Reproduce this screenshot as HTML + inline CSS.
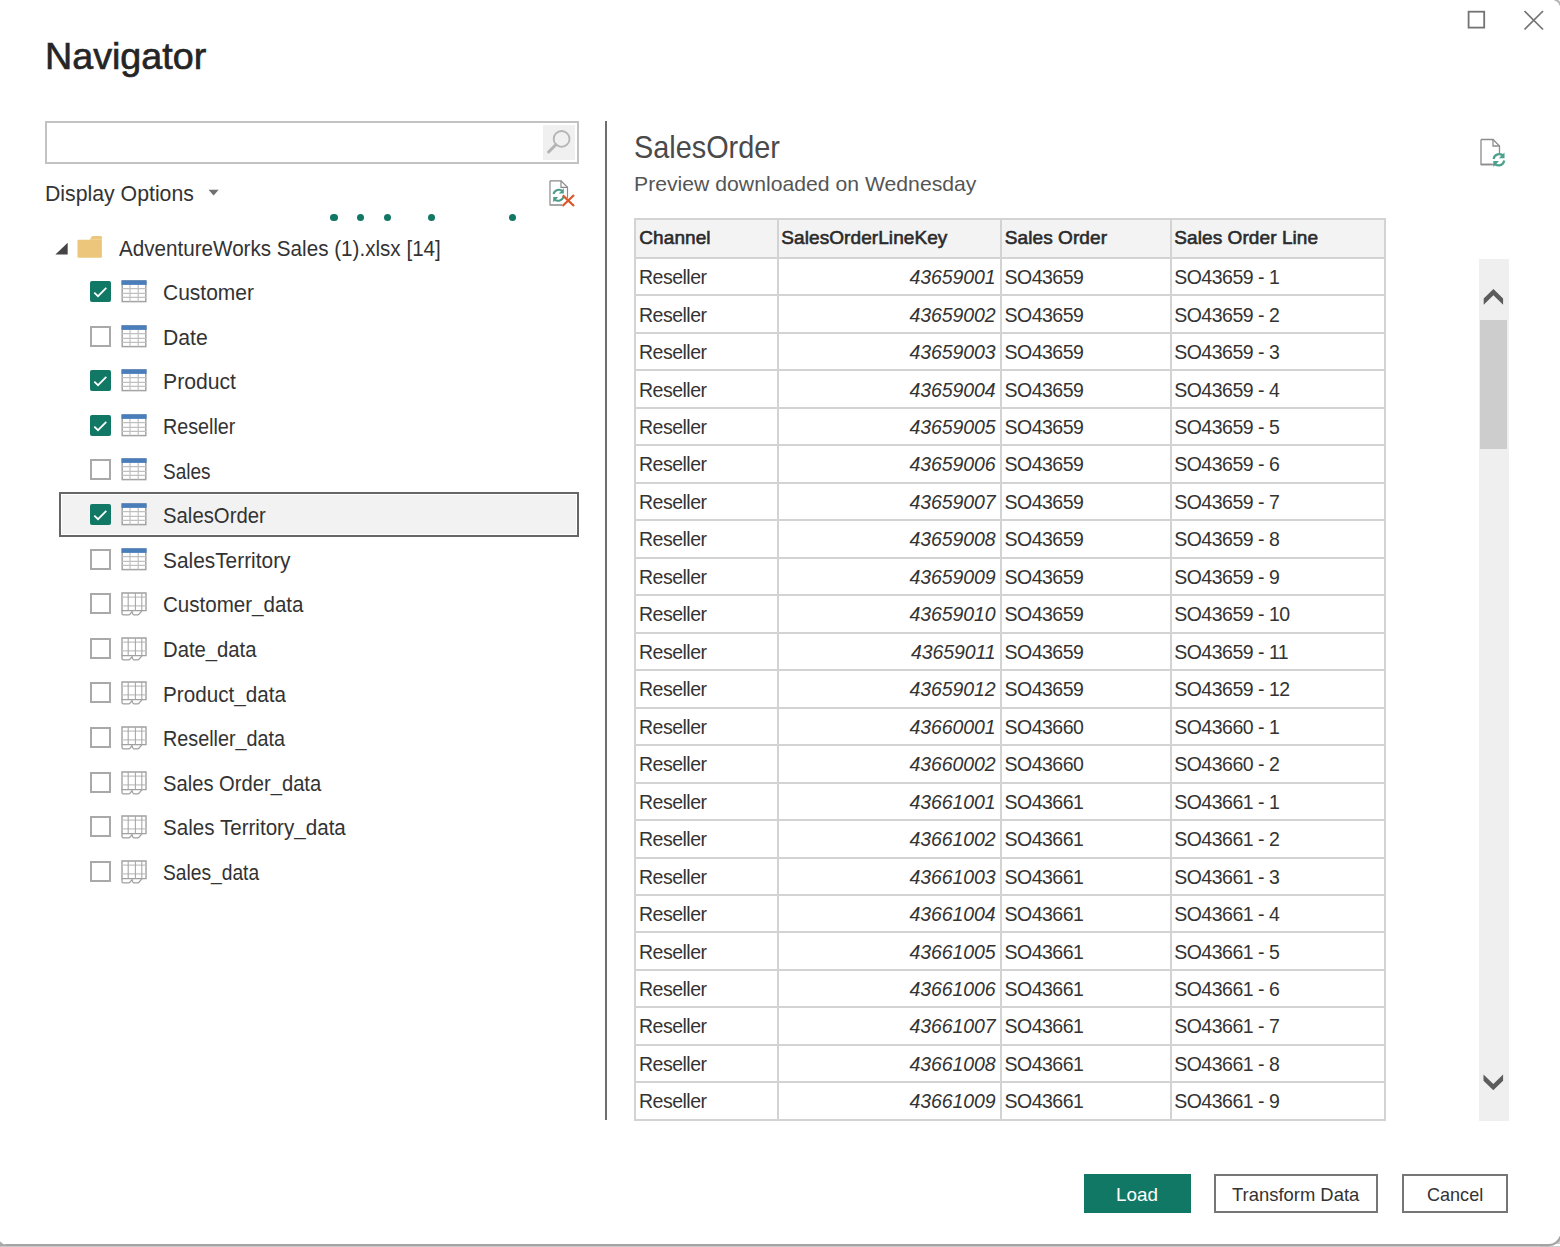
<!DOCTYPE html>
<html><head><meta charset="utf-8"><title>Navigator</title>
<style>
html,body{margin:0;padding:0;}
body{width:1560px;height:1247px;position:relative;overflow:hidden;background:#fff;font-family:"Liberation Sans", sans-serif;}
.t{position:absolute;line-height:1;white-space:nowrap;}
.b{position:absolute;}
svg.b{overflow:visible;}
</style></head><body>
<svg class="b" style="left:0;top:0" width="1560" height="60"><rect x="1468.6" y="11.7" width="15.6" height="15.9" fill="none" stroke="#737373" stroke-width="1.8"/><path d="M1524.5 11 L1543 29.5 M1543 11 L1524.5 29.5" stroke="#737373" stroke-width="1.7" fill="none"/></svg>
<div class="t " style="left:44.75px;top:37.68px;font-size:37px;color:#252525;font-weight:normal;font-style:normal;letter-spacing:0px;-webkit-text-stroke:0.65px #252525;transform:scaleX(1.0181);transform-origin:0 0">Navigator</div>
<div class="b" style="left:45px;top:121px;width:534px;height:43px;border:2px solid #c2c2c2;box-sizing:border-box;background:#fff"></div>
<div class="b" style="left:543px;top:125px;width:32px;height:35px;background:#f0f0f0"></div>
<svg class="b" style="left:543px;top:125px" width="32" height="35"><circle cx="18.6" cy="13.9" r="7.9" fill="none" stroke="#b4b4b4" stroke-width="1.8"/><path d="M12.8 19.7 L5.6 27" stroke="#b4b4b4" stroke-width="3" stroke-linecap="round"/></svg>
<div class="t " style="left:44.95px;top:183.38px;font-size:22px;color:#333;font-weight:normal;font-style:normal;letter-spacing:0px;;transform:scaleX(0.9664);transform-origin:0 0">Display Options</div>
<svg class="b" style="left:205px;top:186px" width="16" height="12"><path d="M3.5 3.8 L13.7 3.8 L8.6 9.6 Z" fill="#707070"/></svg>
<svg class="b" style="left:545px;top:176px" width="34" height="34"><path d="M5 4.8 H16 L22.5 11.3 V22 M17 29 H5 Z" fill="#fff" stroke="#8a8a8a" stroke-width="1.2"/><path d="M5 4.8 V29 H17" fill="none" stroke="#8a8a8a" stroke-width="1.2"/><path d="M16 4.8 V11.3 H22.5" fill="none" stroke="#8a8a8a" stroke-width="1.2"/><path d="M8.5 18 A5.6 5.6 0 0 1 17.6 15.2" fill="none" stroke="#4d9c8a" stroke-width="2"/><path d="M18.8 12.3 V17.6 H13.8 Z" fill="#4d9c8a"/><path d="M18.6 20.6 A5.6 5.6 0 0 1 9.5 23.4" fill="none" stroke="#4d9c8a" stroke-width="2"/><path d="M8.2 26.2 V21 H13.2 Z" fill="#4d9c8a"/><path d="M17.5 30 L29 19 M17.8 19.4 L29 30" stroke="#d9592c" stroke-width="2.3"/></svg>
<div class="b" style="left:330.4px;top:213.8px;width:7.4px;height:7.4px;border-radius:50%;background:#117865"></div>
<div class="b" style="left:356.9px;top:213.8px;width:7.4px;height:7.4px;border-radius:50%;background:#117865"></div>
<div class="b" style="left:384.0px;top:213.8px;width:7.4px;height:7.4px;border-radius:50%;background:#117865"></div>
<div class="b" style="left:427.5px;top:213.8px;width:7.4px;height:7.4px;border-radius:50%;background:#117865"></div>
<div class="b" style="left:509.0px;top:213.8px;width:7.4px;height:7.4px;border-radius:50%;background:#117865"></div>
<svg class="b" style="left:54px;top:241px" width="16" height="16"><path d="M13.7 1.7 L13.7 13.6 L1.4 13.6 Z" fill="#444"/></svg>
<svg class="b" style="left:76px;top:234px" width="28" height="26"><path d="M13.6 5.8 L15.8 2.6 Q16.2 2 17 2 H24.8 Q25.9 2 25.9 3.1 V5.8 Z" fill="#ecc67a"/><rect x="1.5" y="5.8" width="24.4" height="17.9" rx="0.8" fill="#ecc67a"/></svg>
<div class="t " style="left:118.50px;top:238.60px;font-size:21.5px;color:#333;font-weight:normal;font-style:normal;letter-spacing:0px;;transform:scaleX(0.9596);transform-origin:0 0">AdventureWorks Sales (1).xlsx [14]</div>
<div class="b" style="left:59px;top:492px;width:520px;height:45px;border:2px solid #666;box-sizing:border-box;background:#f2f2f2;box-shadow:inset 0 0 0 1px #fff"></div>
<div class="b" style="left:90px;top:281px;width:21px;height:21px;border-radius:2px;background:#117865"></div>
<svg class="b" style="left:90px;top:281px" width="21" height="21"><path d="M4.3 11.6 L8 15.2 L16.3 6.8" fill="none" stroke="#fff" stroke-width="1.7"/></svg>
<svg class="b" style="left:121.3px;top:280px" width="26" height="24"><rect x="1.2" y="1" width="23.6" height="20.6" fill="#fff" stroke="#a3a3a3" stroke-width="1.5"/><path d="M1 8.7 H25 M1 13.3 H25 M1 17.4 H25 M9 5 V21.5 M17.2 5 V21.5" stroke="#c0c0c0" stroke-width="1.2"/><rect x="0.5" y="0.3" width="25.1" height="4.6" fill="#4a7ebb"/></svg>
<div class="t " style="left:163.00px;top:283.20px;font-size:21.5px;color:#333;font-weight:normal;font-style:normal;letter-spacing:0px;transform:scaleX(0.9763);transform-origin:0 0">Customer</div>
<div class="b" style="left:90px;top:326px;width:21px;height:21px;border:2px solid #a9a9a9;box-sizing:border-box;background:#fff"></div>
<svg class="b" style="left:121.3px;top:325px" width="26" height="24"><rect x="1.2" y="1" width="23.6" height="20.6" fill="#fff" stroke="#a3a3a3" stroke-width="1.5"/><path d="M1 8.7 H25 M1 13.3 H25 M1 17.4 H25 M9 5 V21.5 M17.2 5 V21.5" stroke="#c0c0c0" stroke-width="1.2"/><rect x="0.5" y="0.3" width="25.1" height="4.6" fill="#4a7ebb"/></svg>
<div class="t " style="left:163.00px;top:327.80px;font-size:21.5px;color:#333;font-weight:normal;font-style:normal;letter-spacing:0px;transform:scaleX(0.9841);transform-origin:0 0">Date</div>
<div class="b" style="left:90px;top:370px;width:21px;height:21px;border-radius:2px;background:#117865"></div>
<svg class="b" style="left:90px;top:370px" width="21" height="21"><path d="M4.3 11.6 L8 15.2 L16.3 6.8" fill="none" stroke="#fff" stroke-width="1.7"/></svg>
<svg class="b" style="left:121.3px;top:369px" width="26" height="24"><rect x="1.2" y="1" width="23.6" height="20.6" fill="#fff" stroke="#a3a3a3" stroke-width="1.5"/><path d="M1 8.7 H25 M1 13.3 H25 M1 17.4 H25 M9 5 V21.5 M17.2 5 V21.5" stroke="#c0c0c0" stroke-width="1.2"/><rect x="0.5" y="0.3" width="25.1" height="4.6" fill="#4a7ebb"/></svg>
<div class="t " style="left:163.00px;top:372.40px;font-size:21.5px;color:#333;font-weight:normal;font-style:normal;letter-spacing:0px;transform:scaleX(0.9851);transform-origin:0 0">Product</div>
<div class="b" style="left:90px;top:415px;width:21px;height:21px;border-radius:2px;background:#117865"></div>
<svg class="b" style="left:90px;top:415px" width="21" height="21"><path d="M4.3 11.6 L8 15.2 L16.3 6.8" fill="none" stroke="#fff" stroke-width="1.7"/></svg>
<svg class="b" style="left:121.3px;top:414px" width="26" height="24"><rect x="1.2" y="1" width="23.6" height="20.6" fill="#fff" stroke="#a3a3a3" stroke-width="1.5"/><path d="M1 8.7 H25 M1 13.3 H25 M1 17.4 H25 M9 5 V21.5 M17.2 5 V21.5" stroke="#c0c0c0" stroke-width="1.2"/><rect x="0.5" y="0.3" width="25.1" height="4.6" fill="#4a7ebb"/></svg>
<div class="t " style="left:163.00px;top:417.00px;font-size:21.5px;color:#333;font-weight:normal;font-style:normal;letter-spacing:0px;transform:scaleX(0.9177);transform-origin:0 0">Reseller</div>
<div class="b" style="left:90px;top:459px;width:21px;height:21px;border:2px solid #a9a9a9;box-sizing:border-box;background:#fff"></div>
<svg class="b" style="left:121.3px;top:458px" width="26" height="24"><rect x="1.2" y="1" width="23.6" height="20.6" fill="#fff" stroke="#a3a3a3" stroke-width="1.5"/><path d="M1 8.7 H25 M1 13.3 H25 M1 17.4 H25 M9 5 V21.5 M17.2 5 V21.5" stroke="#c0c0c0" stroke-width="1.2"/><rect x="0.5" y="0.3" width="25.1" height="4.6" fill="#4a7ebb"/></svg>
<div class="t " style="left:163.00px;top:461.60px;font-size:21.5px;color:#333;font-weight:normal;font-style:normal;letter-spacing:0px;transform:scaleX(0.8849);transform-origin:0 0">Sales</div>
<div class="b" style="left:90px;top:504px;width:21px;height:21px;border-radius:2px;background:#117865"></div>
<svg class="b" style="left:90px;top:504px" width="21" height="21"><path d="M4.3 11.6 L8 15.2 L16.3 6.8" fill="none" stroke="#fff" stroke-width="1.7"/></svg>
<svg class="b" style="left:121.3px;top:503px" width="26" height="24"><rect x="1.2" y="1" width="23.6" height="20.6" fill="#fff" stroke="#a3a3a3" stroke-width="1.5"/><path d="M1 8.7 H25 M1 13.3 H25 M1 17.4 H25 M9 5 V21.5 M17.2 5 V21.5" stroke="#c0c0c0" stroke-width="1.2"/><rect x="0.5" y="0.3" width="25.1" height="4.6" fill="#4a7ebb"/></svg>
<div class="t " style="left:163.00px;top:506.20px;font-size:21.5px;color:#333;font-weight:normal;font-style:normal;letter-spacing:0px;transform:scaleX(0.9454);transform-origin:0 0">SalesOrder</div>
<div class="b" style="left:90px;top:549px;width:21px;height:21px;border:2px solid #a9a9a9;box-sizing:border-box;background:#fff"></div>
<svg class="b" style="left:121.3px;top:548px" width="26" height="24"><rect x="1.2" y="1" width="23.6" height="20.6" fill="#fff" stroke="#a3a3a3" stroke-width="1.5"/><path d="M1 8.7 H25 M1 13.3 H25 M1 17.4 H25 M9 5 V21.5 M17.2 5 V21.5" stroke="#c0c0c0" stroke-width="1.2"/><rect x="0.5" y="0.3" width="25.1" height="4.6" fill="#4a7ebb"/></svg>
<div class="t " style="left:163.00px;top:550.80px;font-size:21.5px;color:#333;font-weight:normal;font-style:normal;letter-spacing:0px;transform:scaleX(0.9702);transform-origin:0 0">SalesTerritory</div>
<div class="b" style="left:90px;top:593px;width:21px;height:21px;border:2px solid #a9a9a9;box-sizing:border-box;background:#fff"></div>
<svg class="b" style="left:121.3px;top:592px" width="26" height="25"><path d="M1 1 H25 V18.6 H1 Z" fill="#fff" stroke="#a0a0a0" stroke-width="1.4"/><path d="M1 5.2 H25 M1 13.9 H25" stroke="#c4c4c4" stroke-width="1.2"/><path d="M7.2 1 V18.6 M14.4 1 V18.6 M20.8 1 V18.6" stroke="#a8a8a8" stroke-width="1.1"/><path d="M1 18.6 V21.5 Q1 22.8 2.3 22.8 H7.5 Q8.5 22.8 9.3 21.8 L11 19.6 Q11.8 22.8 13 22.8 H16.6 Q17.5 22.8 18.3 21.8 L21 18.6" fill="none" stroke="#a0a0a0" stroke-width="1.3"/></svg>
<div class="t " style="left:163.00px;top:595.40px;font-size:21.5px;color:#333;font-weight:normal;font-style:normal;letter-spacing:0px;transform:scaleX(0.9558);transform-origin:0 0">Customer_data</div>
<div class="b" style="left:90px;top:638px;width:21px;height:21px;border:2px solid #a9a9a9;box-sizing:border-box;background:#fff"></div>
<svg class="b" style="left:121.3px;top:637px" width="26" height="25"><path d="M1 1 H25 V18.6 H1 Z" fill="#fff" stroke="#a0a0a0" stroke-width="1.4"/><path d="M1 5.2 H25 M1 13.9 H25" stroke="#c4c4c4" stroke-width="1.2"/><path d="M7.2 1 V18.6 M14.4 1 V18.6 M20.8 1 V18.6" stroke="#a8a8a8" stroke-width="1.1"/><path d="M1 18.6 V21.5 Q1 22.8 2.3 22.8 H7.5 Q8.5 22.8 9.3 21.8 L11 19.6 Q11.8 22.8 13 22.8 H16.6 Q17.5 22.8 18.3 21.8 L21 18.6" fill="none" stroke="#a0a0a0" stroke-width="1.3"/></svg>
<div class="t " style="left:163.00px;top:640.00px;font-size:21.5px;color:#333;font-weight:normal;font-style:normal;letter-spacing:0px;transform:scaleX(0.9424);transform-origin:0 0">Date_data</div>
<div class="b" style="left:90px;top:682px;width:21px;height:21px;border:2px solid #a9a9a9;box-sizing:border-box;background:#fff"></div>
<svg class="b" style="left:121.3px;top:681px" width="26" height="25"><path d="M1 1 H25 V18.6 H1 Z" fill="#fff" stroke="#a0a0a0" stroke-width="1.4"/><path d="M1 5.2 H25 M1 13.9 H25" stroke="#c4c4c4" stroke-width="1.2"/><path d="M7.2 1 V18.6 M14.4 1 V18.6 M20.8 1 V18.6" stroke="#a8a8a8" stroke-width="1.1"/><path d="M1 18.6 V21.5 Q1 22.8 2.3 22.8 H7.5 Q8.5 22.8 9.3 21.8 L11 19.6 Q11.8 22.8 13 22.8 H16.6 Q17.5 22.8 18.3 21.8 L21 18.6" fill="none" stroke="#a0a0a0" stroke-width="1.3"/></svg>
<div class="t " style="left:163.00px;top:684.60px;font-size:21.5px;color:#333;font-weight:normal;font-style:normal;letter-spacing:0px;transform:scaleX(0.9609);transform-origin:0 0">Product_data</div>
<div class="b" style="left:90px;top:727px;width:21px;height:21px;border:2px solid #a9a9a9;box-sizing:border-box;background:#fff"></div>
<svg class="b" style="left:121.3px;top:726px" width="26" height="25"><path d="M1 1 H25 V18.6 H1 Z" fill="#fff" stroke="#a0a0a0" stroke-width="1.4"/><path d="M1 5.2 H25 M1 13.9 H25" stroke="#c4c4c4" stroke-width="1.2"/><path d="M7.2 1 V18.6 M14.4 1 V18.6 M20.8 1 V18.6" stroke="#a8a8a8" stroke-width="1.1"/><path d="M1 18.6 V21.5 Q1 22.8 2.3 22.8 H7.5 Q8.5 22.8 9.3 21.8 L11 19.6 Q11.8 22.8 13 22.8 H16.6 Q17.5 22.8 18.3 21.8 L21 18.6" fill="none" stroke="#a0a0a0" stroke-width="1.3"/></svg>
<div class="t " style="left:163.00px;top:729.20px;font-size:21.5px;color:#333;font-weight:normal;font-style:normal;letter-spacing:0px;transform:scaleX(0.9203);transform-origin:0 0">Reseller_data</div>
<div class="b" style="left:90px;top:772px;width:21px;height:21px;border:2px solid #a9a9a9;box-sizing:border-box;background:#fff"></div>
<svg class="b" style="left:121.3px;top:771px" width="26" height="25"><path d="M1 1 H25 V18.6 H1 Z" fill="#fff" stroke="#a0a0a0" stroke-width="1.4"/><path d="M1 5.2 H25 M1 13.9 H25" stroke="#c4c4c4" stroke-width="1.2"/><path d="M7.2 1 V18.6 M14.4 1 V18.6 M20.8 1 V18.6" stroke="#a8a8a8" stroke-width="1.1"/><path d="M1 18.6 V21.5 Q1 22.8 2.3 22.8 H7.5 Q8.5 22.8 9.3 21.8 L11 19.6 Q11.8 22.8 13 22.8 H16.6 Q17.5 22.8 18.3 21.8 L21 18.6" fill="none" stroke="#a0a0a0" stroke-width="1.3"/></svg>
<div class="t " style="left:163.00px;top:773.80px;font-size:21.5px;color:#333;font-weight:normal;font-style:normal;letter-spacing:0px;transform:scaleX(0.9387);transform-origin:0 0">Sales Order_data</div>
<div class="b" style="left:90px;top:816px;width:21px;height:21px;border:2px solid #a9a9a9;box-sizing:border-box;background:#fff"></div>
<svg class="b" style="left:121.3px;top:815px" width="26" height="25"><path d="M1 1 H25 V18.6 H1 Z" fill="#fff" stroke="#a0a0a0" stroke-width="1.4"/><path d="M1 5.2 H25 M1 13.9 H25" stroke="#c4c4c4" stroke-width="1.2"/><path d="M7.2 1 V18.6 M14.4 1 V18.6 M20.8 1 V18.6" stroke="#a8a8a8" stroke-width="1.1"/><path d="M1 18.6 V21.5 Q1 22.8 2.3 22.8 H7.5 Q8.5 22.8 9.3 21.8 L11 19.6 Q11.8 22.8 13 22.8 H16.6 Q17.5 22.8 18.3 21.8 L21 18.6" fill="none" stroke="#a0a0a0" stroke-width="1.3"/></svg>
<div class="t " style="left:163.00px;top:818.40px;font-size:21.5px;color:#333;font-weight:normal;font-style:normal;letter-spacing:0px;transform:scaleX(0.9581);transform-origin:0 0">Sales Territory_data</div>
<div class="b" style="left:90px;top:861px;width:21px;height:21px;border:2px solid #a9a9a9;box-sizing:border-box;background:#fff"></div>
<svg class="b" style="left:121.3px;top:860px" width="26" height="25"><path d="M1 1 H25 V18.6 H1 Z" fill="#fff" stroke="#a0a0a0" stroke-width="1.4"/><path d="M1 5.2 H25 M1 13.9 H25" stroke="#c4c4c4" stroke-width="1.2"/><path d="M7.2 1 V18.6 M14.4 1 V18.6 M20.8 1 V18.6" stroke="#a8a8a8" stroke-width="1.1"/><path d="M1 18.6 V21.5 Q1 22.8 2.3 22.8 H7.5 Q8.5 22.8 9.3 21.8 L11 19.6 Q11.8 22.8 13 22.8 H16.6 Q17.5 22.8 18.3 21.8 L21 18.6" fill="none" stroke="#a0a0a0" stroke-width="1.3"/></svg>
<div class="t " style="left:163.00px;top:863.00px;font-size:21.5px;color:#333;font-weight:normal;font-style:normal;letter-spacing:0px;transform:scaleX(0.8935);transform-origin:0 0">Sales_data</div>
<div class="b" style="left:605px;top:121px;width:2px;height:999px;background:#6e6e6e"></div>
<div class="t " style="left:634.37px;top:130.71px;font-size:32px;color:#4a4a4a;font-weight:normal;font-style:normal;letter-spacing:0px;;transform:scaleX(0.9013);transform-origin:0 0">SalesOrder</div>
<div class="t " style="left:634.39px;top:172.52px;font-size:21px;color:#555;font-weight:normal;font-style:normal;letter-spacing:0px;;transform:scaleX(1.0092);transform-origin:0 0">Preview downloaded on Wednesday</div>
<svg class="b" style="left:1476px;top:134px" width="34" height="36"><path d="M5 5.5 H17 L23.5 12 V21 M21 30.5 H5 Z" fill="none" stroke="#8c8c8c" stroke-width="1.3"/><path d="M5 5.5 V30.5 H16" fill="none" stroke="#8c8c8c" stroke-width="1.3"/><path d="M17 5.5 V12 H23.5" fill="none" stroke="#8c8c8c" stroke-width="1.3"/><path d="M17.6 25 A5.7 5.7 0 0 1 27.5 22" fill="none" stroke="#4da08b" stroke-width="2.2"/><path d="M28.5 18.5 V24.3 H22.8 Z" fill="#4da08b"/><path d="M28.2 26.5 A5.7 5.7 0 0 1 18.3 29.5" fill="none" stroke="#4da08b" stroke-width="2.2"/><path d="M17.3 33 V27 H23 Z" fill="#4da08b"/></svg>
<div class="b" style="left:634px;top:218px;width:752px;height:903px;background:#fff;border:2px solid #d3d3d3;box-sizing:border-box"></div>
<div class="b" style="left:636px;top:220px;width:748px;height:37px;background:#f3f3f3"></div>
<div class="b" style="left:634px;top:257px;width:752px;height:2px;background:#d3d3d3"></div>
<div class="b" style="left:634px;top:294px;width:752px;height:2px;background:#d3d3d3"></div>
<div class="b" style="left:634px;top:332px;width:752px;height:2px;background:#d3d3d3"></div>
<div class="b" style="left:634px;top:369px;width:752px;height:2px;background:#d3d3d3"></div>
<div class="b" style="left:634px;top:407px;width:752px;height:2px;background:#d3d3d3"></div>
<div class="b" style="left:634px;top:444px;width:752px;height:2px;background:#d3d3d3"></div>
<div class="b" style="left:634px;top:482px;width:752px;height:2px;background:#d3d3d3"></div>
<div class="b" style="left:634px;top:519px;width:752px;height:2px;background:#d3d3d3"></div>
<div class="b" style="left:634px;top:557px;width:752px;height:2px;background:#d3d3d3"></div>
<div class="b" style="left:634px;top:594px;width:752px;height:2px;background:#d3d3d3"></div>
<div class="b" style="left:634px;top:632px;width:752px;height:2px;background:#d3d3d3"></div>
<div class="b" style="left:634px;top:669px;width:752px;height:2px;background:#d3d3d3"></div>
<div class="b" style="left:634px;top:707px;width:752px;height:2px;background:#d3d3d3"></div>
<div class="b" style="left:634px;top:744px;width:752px;height:2px;background:#d3d3d3"></div>
<div class="b" style="left:634px;top:782px;width:752px;height:2px;background:#d3d3d3"></div>
<div class="b" style="left:634px;top:819px;width:752px;height:2px;background:#d3d3d3"></div>
<div class="b" style="left:634px;top:857px;width:752px;height:2px;background:#d3d3d3"></div>
<div class="b" style="left:634px;top:894px;width:752px;height:2px;background:#d3d3d3"></div>
<div class="b" style="left:634px;top:931px;width:752px;height:2px;background:#d3d3d3"></div>
<div class="b" style="left:634px;top:969px;width:752px;height:2px;background:#d3d3d3"></div>
<div class="b" style="left:634px;top:1006px;width:752px;height:2px;background:#d3d3d3"></div>
<div class="b" style="left:634px;top:1044px;width:752px;height:2px;background:#d3d3d3"></div>
<div class="b" style="left:634px;top:1081px;width:752px;height:2px;background:#d3d3d3"></div>
<div class="b" style="left:777px;top:218px;width:2px;height:903px;background:#d3d3d3"></div>
<div class="b" style="left:1000px;top:218px;width:2px;height:903px;background:#d3d3d3"></div>
<div class="b" style="left:1170px;top:218px;width:2px;height:903px;background:#d3d3d3"></div>
<div class="t " style="left:639.30px;top:228.22px;font-size:19px;color:#2b2b2b;font-weight:normal;font-style:normal;letter-spacing:0.08px;-webkit-text-stroke:0.6px #2b2b2b">Channel</div>
<div class="t " style="left:781.30px;top:228.22px;font-size:19px;color:#2b2b2b;font-weight:normal;font-style:normal;letter-spacing:0.08px;-webkit-text-stroke:0.6px #2b2b2b">SalesOrderLineKey</div>
<div class="t " style="left:1004.80px;top:228.22px;font-size:19px;color:#2b2b2b;font-weight:normal;font-style:normal;letter-spacing:0.08px;-webkit-text-stroke:0.6px #2b2b2b">Sales Order</div>
<div class="t " style="left:1174.30px;top:228.22px;font-size:19px;color:#2b2b2b;font-weight:normal;font-style:normal;letter-spacing:0.08px;-webkit-text-stroke:0.6px #2b2b2b">Sales Order Line</div>
<div class="t " style="left:639.00px;top:268.09px;font-size:19.5px;color:#333;font-weight:normal;font-style:normal;letter-spacing:-0.5px;">Reseller</div>
<div class="t" style="right:564.50px;top:268.09px;font-size:19.5px;color:#333;font-weight:normal;font-style:italic;letter-spacing:-0.1px;">43659001</div>
<div class="t " style="left:1004.50px;top:268.09px;font-size:19.5px;color:#333;font-weight:normal;font-style:normal;letter-spacing:-0.5px;">SO43659</div>
<div class="t " style="left:1174.20px;top:268.09px;font-size:19.5px;color:#333;font-weight:normal;font-style:normal;letter-spacing:-0.5px;">SO43659 - 1</div>
<div class="t " style="left:639.00px;top:305.56px;font-size:19.5px;color:#333;font-weight:normal;font-style:normal;letter-spacing:-0.5px;">Reseller</div>
<div class="t" style="right:564.50px;top:305.56px;font-size:19.5px;color:#333;font-weight:normal;font-style:italic;letter-spacing:-0.1px;">43659002</div>
<div class="t " style="left:1004.50px;top:305.56px;font-size:19.5px;color:#333;font-weight:normal;font-style:normal;letter-spacing:-0.5px;">SO43659</div>
<div class="t " style="left:1174.20px;top:305.56px;font-size:19.5px;color:#333;font-weight:normal;font-style:normal;letter-spacing:-0.5px;">SO43659 - 2</div>
<div class="t " style="left:639.00px;top:343.03px;font-size:19.5px;color:#333;font-weight:normal;font-style:normal;letter-spacing:-0.5px;">Reseller</div>
<div class="t" style="right:564.50px;top:343.03px;font-size:19.5px;color:#333;font-weight:normal;font-style:italic;letter-spacing:-0.1px;">43659003</div>
<div class="t " style="left:1004.50px;top:343.03px;font-size:19.5px;color:#333;font-weight:normal;font-style:normal;letter-spacing:-0.5px;">SO43659</div>
<div class="t " style="left:1174.20px;top:343.03px;font-size:19.5px;color:#333;font-weight:normal;font-style:normal;letter-spacing:-0.5px;">SO43659 - 3</div>
<div class="t " style="left:639.00px;top:380.50px;font-size:19.5px;color:#333;font-weight:normal;font-style:normal;letter-spacing:-0.5px;">Reseller</div>
<div class="t" style="right:564.50px;top:380.50px;font-size:19.5px;color:#333;font-weight:normal;font-style:italic;letter-spacing:-0.1px;">43659004</div>
<div class="t " style="left:1004.50px;top:380.50px;font-size:19.5px;color:#333;font-weight:normal;font-style:normal;letter-spacing:-0.5px;">SO43659</div>
<div class="t " style="left:1174.20px;top:380.50px;font-size:19.5px;color:#333;font-weight:normal;font-style:normal;letter-spacing:-0.5px;">SO43659 - 4</div>
<div class="t " style="left:639.00px;top:417.97px;font-size:19.5px;color:#333;font-weight:normal;font-style:normal;letter-spacing:-0.5px;">Reseller</div>
<div class="t" style="right:564.50px;top:417.97px;font-size:19.5px;color:#333;font-weight:normal;font-style:italic;letter-spacing:-0.1px;">43659005</div>
<div class="t " style="left:1004.50px;top:417.97px;font-size:19.5px;color:#333;font-weight:normal;font-style:normal;letter-spacing:-0.5px;">SO43659</div>
<div class="t " style="left:1174.20px;top:417.97px;font-size:19.5px;color:#333;font-weight:normal;font-style:normal;letter-spacing:-0.5px;">SO43659 - 5</div>
<div class="t " style="left:639.00px;top:455.44px;font-size:19.5px;color:#333;font-weight:normal;font-style:normal;letter-spacing:-0.5px;">Reseller</div>
<div class="t" style="right:564.50px;top:455.44px;font-size:19.5px;color:#333;font-weight:normal;font-style:italic;letter-spacing:-0.1px;">43659006</div>
<div class="t " style="left:1004.50px;top:455.44px;font-size:19.5px;color:#333;font-weight:normal;font-style:normal;letter-spacing:-0.5px;">SO43659</div>
<div class="t " style="left:1174.20px;top:455.44px;font-size:19.5px;color:#333;font-weight:normal;font-style:normal;letter-spacing:-0.5px;">SO43659 - 6</div>
<div class="t " style="left:639.00px;top:492.91px;font-size:19.5px;color:#333;font-weight:normal;font-style:normal;letter-spacing:-0.5px;">Reseller</div>
<div class="t" style="right:564.50px;top:492.91px;font-size:19.5px;color:#333;font-weight:normal;font-style:italic;letter-spacing:-0.1px;">43659007</div>
<div class="t " style="left:1004.50px;top:492.91px;font-size:19.5px;color:#333;font-weight:normal;font-style:normal;letter-spacing:-0.5px;">SO43659</div>
<div class="t " style="left:1174.20px;top:492.91px;font-size:19.5px;color:#333;font-weight:normal;font-style:normal;letter-spacing:-0.5px;">SO43659 - 7</div>
<div class="t " style="left:639.00px;top:530.38px;font-size:19.5px;color:#333;font-weight:normal;font-style:normal;letter-spacing:-0.5px;">Reseller</div>
<div class="t" style="right:564.50px;top:530.38px;font-size:19.5px;color:#333;font-weight:normal;font-style:italic;letter-spacing:-0.1px;">43659008</div>
<div class="t " style="left:1004.50px;top:530.38px;font-size:19.5px;color:#333;font-weight:normal;font-style:normal;letter-spacing:-0.5px;">SO43659</div>
<div class="t " style="left:1174.20px;top:530.38px;font-size:19.5px;color:#333;font-weight:normal;font-style:normal;letter-spacing:-0.5px;">SO43659 - 8</div>
<div class="t " style="left:639.00px;top:567.85px;font-size:19.5px;color:#333;font-weight:normal;font-style:normal;letter-spacing:-0.5px;">Reseller</div>
<div class="t" style="right:564.50px;top:567.85px;font-size:19.5px;color:#333;font-weight:normal;font-style:italic;letter-spacing:-0.1px;">43659009</div>
<div class="t " style="left:1004.50px;top:567.85px;font-size:19.5px;color:#333;font-weight:normal;font-style:normal;letter-spacing:-0.5px;">SO43659</div>
<div class="t " style="left:1174.20px;top:567.85px;font-size:19.5px;color:#333;font-weight:normal;font-style:normal;letter-spacing:-0.5px;">SO43659 - 9</div>
<div class="t " style="left:639.00px;top:605.32px;font-size:19.5px;color:#333;font-weight:normal;font-style:normal;letter-spacing:-0.5px;">Reseller</div>
<div class="t" style="right:564.50px;top:605.32px;font-size:19.5px;color:#333;font-weight:normal;font-style:italic;letter-spacing:-0.1px;">43659010</div>
<div class="t " style="left:1004.50px;top:605.32px;font-size:19.5px;color:#333;font-weight:normal;font-style:normal;letter-spacing:-0.5px;">SO43659</div>
<div class="t " style="left:1174.20px;top:605.32px;font-size:19.5px;color:#333;font-weight:normal;font-style:normal;letter-spacing:-0.5px;">SO43659 - 10</div>
<div class="t " style="left:639.00px;top:642.79px;font-size:19.5px;color:#333;font-weight:normal;font-style:normal;letter-spacing:-0.5px;">Reseller</div>
<div class="t" style="right:564.50px;top:642.79px;font-size:19.5px;color:#333;font-weight:normal;font-style:italic;letter-spacing:-0.1px;">43659011</div>
<div class="t " style="left:1004.50px;top:642.79px;font-size:19.5px;color:#333;font-weight:normal;font-style:normal;letter-spacing:-0.5px;">SO43659</div>
<div class="t " style="left:1174.20px;top:642.79px;font-size:19.5px;color:#333;font-weight:normal;font-style:normal;letter-spacing:-0.5px;">SO43659 - 11</div>
<div class="t " style="left:639.00px;top:680.26px;font-size:19.5px;color:#333;font-weight:normal;font-style:normal;letter-spacing:-0.5px;">Reseller</div>
<div class="t" style="right:564.50px;top:680.26px;font-size:19.5px;color:#333;font-weight:normal;font-style:italic;letter-spacing:-0.1px;">43659012</div>
<div class="t " style="left:1004.50px;top:680.26px;font-size:19.5px;color:#333;font-weight:normal;font-style:normal;letter-spacing:-0.5px;">SO43659</div>
<div class="t " style="left:1174.20px;top:680.26px;font-size:19.5px;color:#333;font-weight:normal;font-style:normal;letter-spacing:-0.5px;">SO43659 - 12</div>
<div class="t " style="left:639.00px;top:717.73px;font-size:19.5px;color:#333;font-weight:normal;font-style:normal;letter-spacing:-0.5px;">Reseller</div>
<div class="t" style="right:564.50px;top:717.73px;font-size:19.5px;color:#333;font-weight:normal;font-style:italic;letter-spacing:-0.1px;">43660001</div>
<div class="t " style="left:1004.50px;top:717.73px;font-size:19.5px;color:#333;font-weight:normal;font-style:normal;letter-spacing:-0.5px;">SO43660</div>
<div class="t " style="left:1174.20px;top:717.73px;font-size:19.5px;color:#333;font-weight:normal;font-style:normal;letter-spacing:-0.5px;">SO43660 - 1</div>
<div class="t " style="left:639.00px;top:755.20px;font-size:19.5px;color:#333;font-weight:normal;font-style:normal;letter-spacing:-0.5px;">Reseller</div>
<div class="t" style="right:564.50px;top:755.20px;font-size:19.5px;color:#333;font-weight:normal;font-style:italic;letter-spacing:-0.1px;">43660002</div>
<div class="t " style="left:1004.50px;top:755.20px;font-size:19.5px;color:#333;font-weight:normal;font-style:normal;letter-spacing:-0.5px;">SO43660</div>
<div class="t " style="left:1174.20px;top:755.20px;font-size:19.5px;color:#333;font-weight:normal;font-style:normal;letter-spacing:-0.5px;">SO43660 - 2</div>
<div class="t " style="left:639.00px;top:792.67px;font-size:19.5px;color:#333;font-weight:normal;font-style:normal;letter-spacing:-0.5px;">Reseller</div>
<div class="t" style="right:564.50px;top:792.67px;font-size:19.5px;color:#333;font-weight:normal;font-style:italic;letter-spacing:-0.1px;">43661001</div>
<div class="t " style="left:1004.50px;top:792.67px;font-size:19.5px;color:#333;font-weight:normal;font-style:normal;letter-spacing:-0.5px;">SO43661</div>
<div class="t " style="left:1174.20px;top:792.67px;font-size:19.5px;color:#333;font-weight:normal;font-style:normal;letter-spacing:-0.5px;">SO43661 - 1</div>
<div class="t " style="left:639.00px;top:830.14px;font-size:19.5px;color:#333;font-weight:normal;font-style:normal;letter-spacing:-0.5px;">Reseller</div>
<div class="t" style="right:564.50px;top:830.14px;font-size:19.5px;color:#333;font-weight:normal;font-style:italic;letter-spacing:-0.1px;">43661002</div>
<div class="t " style="left:1004.50px;top:830.14px;font-size:19.5px;color:#333;font-weight:normal;font-style:normal;letter-spacing:-0.5px;">SO43661</div>
<div class="t " style="left:1174.20px;top:830.14px;font-size:19.5px;color:#333;font-weight:normal;font-style:normal;letter-spacing:-0.5px;">SO43661 - 2</div>
<div class="t " style="left:639.00px;top:867.61px;font-size:19.5px;color:#333;font-weight:normal;font-style:normal;letter-spacing:-0.5px;">Reseller</div>
<div class="t" style="right:564.50px;top:867.61px;font-size:19.5px;color:#333;font-weight:normal;font-style:italic;letter-spacing:-0.1px;">43661003</div>
<div class="t " style="left:1004.50px;top:867.61px;font-size:19.5px;color:#333;font-weight:normal;font-style:normal;letter-spacing:-0.5px;">SO43661</div>
<div class="t " style="left:1174.20px;top:867.61px;font-size:19.5px;color:#333;font-weight:normal;font-style:normal;letter-spacing:-0.5px;">SO43661 - 3</div>
<div class="t " style="left:639.00px;top:905.08px;font-size:19.5px;color:#333;font-weight:normal;font-style:normal;letter-spacing:-0.5px;">Reseller</div>
<div class="t" style="right:564.50px;top:905.08px;font-size:19.5px;color:#333;font-weight:normal;font-style:italic;letter-spacing:-0.1px;">43661004</div>
<div class="t " style="left:1004.50px;top:905.08px;font-size:19.5px;color:#333;font-weight:normal;font-style:normal;letter-spacing:-0.5px;">SO43661</div>
<div class="t " style="left:1174.20px;top:905.08px;font-size:19.5px;color:#333;font-weight:normal;font-style:normal;letter-spacing:-0.5px;">SO43661 - 4</div>
<div class="t " style="left:639.00px;top:942.55px;font-size:19.5px;color:#333;font-weight:normal;font-style:normal;letter-spacing:-0.5px;">Reseller</div>
<div class="t" style="right:564.50px;top:942.55px;font-size:19.5px;color:#333;font-weight:normal;font-style:italic;letter-spacing:-0.1px;">43661005</div>
<div class="t " style="left:1004.50px;top:942.55px;font-size:19.5px;color:#333;font-weight:normal;font-style:normal;letter-spacing:-0.5px;">SO43661</div>
<div class="t " style="left:1174.20px;top:942.55px;font-size:19.5px;color:#333;font-weight:normal;font-style:normal;letter-spacing:-0.5px;">SO43661 - 5</div>
<div class="t " style="left:639.00px;top:980.02px;font-size:19.5px;color:#333;font-weight:normal;font-style:normal;letter-spacing:-0.5px;">Reseller</div>
<div class="t" style="right:564.50px;top:980.02px;font-size:19.5px;color:#333;font-weight:normal;font-style:italic;letter-spacing:-0.1px;">43661006</div>
<div class="t " style="left:1004.50px;top:980.02px;font-size:19.5px;color:#333;font-weight:normal;font-style:normal;letter-spacing:-0.5px;">SO43661</div>
<div class="t " style="left:1174.20px;top:980.02px;font-size:19.5px;color:#333;font-weight:normal;font-style:normal;letter-spacing:-0.5px;">SO43661 - 6</div>
<div class="t " style="left:639.00px;top:1017.49px;font-size:19.5px;color:#333;font-weight:normal;font-style:normal;letter-spacing:-0.5px;">Reseller</div>
<div class="t" style="right:564.50px;top:1017.49px;font-size:19.5px;color:#333;font-weight:normal;font-style:italic;letter-spacing:-0.1px;">43661007</div>
<div class="t " style="left:1004.50px;top:1017.49px;font-size:19.5px;color:#333;font-weight:normal;font-style:normal;letter-spacing:-0.5px;">SO43661</div>
<div class="t " style="left:1174.20px;top:1017.49px;font-size:19.5px;color:#333;font-weight:normal;font-style:normal;letter-spacing:-0.5px;">SO43661 - 7</div>
<div class="t " style="left:639.00px;top:1054.96px;font-size:19.5px;color:#333;font-weight:normal;font-style:normal;letter-spacing:-0.5px;">Reseller</div>
<div class="t" style="right:564.50px;top:1054.96px;font-size:19.5px;color:#333;font-weight:normal;font-style:italic;letter-spacing:-0.1px;">43661008</div>
<div class="t " style="left:1004.50px;top:1054.96px;font-size:19.5px;color:#333;font-weight:normal;font-style:normal;letter-spacing:-0.5px;">SO43661</div>
<div class="t " style="left:1174.20px;top:1054.96px;font-size:19.5px;color:#333;font-weight:normal;font-style:normal;letter-spacing:-0.5px;">SO43661 - 8</div>
<div class="t " style="left:639.00px;top:1092.43px;font-size:19.5px;color:#333;font-weight:normal;font-style:normal;letter-spacing:-0.5px;">Reseller</div>
<div class="t" style="right:564.50px;top:1092.43px;font-size:19.5px;color:#333;font-weight:normal;font-style:italic;letter-spacing:-0.1px;">43661009</div>
<div class="t " style="left:1004.50px;top:1092.43px;font-size:19.5px;color:#333;font-weight:normal;font-style:normal;letter-spacing:-0.5px;">SO43661</div>
<div class="t " style="left:1174.20px;top:1092.43px;font-size:19.5px;color:#333;font-weight:normal;font-style:normal;letter-spacing:-0.5px;">SO43661 - 9</div>
<div class="b" style="left:1479px;top:259px;width:30px;height:862px;background:#efefef"></div>
<div class="b" style="left:1480px;top:320px;width:27px;height:129px;background:#cdcdcd"></div>
<svg class="b" style="left:0;top:0" width="1560" height="1247"><path d="M1483.7 298.5 L1493.4 289 L1503.1 298.5 L1503.1 304.7 L1493.4 295.2 L1483.7 304.7 Z" fill="#5c5c5c"/><path d="M1483.5 1074.5 L1493.3 1084 L1503.1 1074.5 L1503.1 1080.7 L1493.3 1090.2 L1483.5 1080.7 Z" fill="#5c5c5c"/></svg>
<div class="b" style="left:1084px;top:1174px;width:107px;height:39px;background:#117865"></div>
<div class="t " style="left:1116.17px;top:1186.06px;font-size:18.6px;color:#fff;font-weight:normal;font-style:normal;letter-spacing:0px;;transform:scaleX(1.0132);transform-origin:0 0">Load</div>
<div class="b" style="left:1214px;top:1174px;width:164px;height:39px;border:2px solid #767676;box-sizing:border-box;background:#fff"></div>
<div class="t " style="left:1232.30px;top:1186.06px;font-size:18.6px;color:#333;font-weight:normal;font-style:normal;letter-spacing:0px;;transform:scaleX(0.9906);transform-origin:0 0">Transform Data</div>
<div class="b" style="left:1402px;top:1174px;width:106px;height:39px;border:2px solid #767676;box-sizing:border-box;background:#fff"></div>
<div class="t " style="left:1426.54px;top:1186.06px;font-size:18.6px;color:#333;font-weight:normal;font-style:normal;letter-spacing:0px;;transform:scaleX(0.9709);transform-origin:0 0">Cancel</div>
<div class="b" style="left:0px;top:1244px;width:1560px;height:2px;background:#a4a4a4"></div>
<div class="b" style="left:0px;top:1246px;width:1560px;height:1px;background:#c8c8c8"></div>
<svg class="b" style="left:0;top:0" width="1560" height="1247"><path d="M1549 1245.1 A12 12 0 0 0 1560.5 1236.5 V1247 H1549 Z" fill="#d0d0d0"/><rect x="1549" y="1244" width="11" height="3" fill="#fff"/><path d="M1540 1245.1 H1549 A12 12 0 0 0 1560.5 1236.5" fill="none" stroke="#a4a4a4" stroke-width="2.2"/><path d="M1549 1246.5 H1560" stroke="#d0d0d0" stroke-width="1"/><path d="M1554.5 -0.5 A8 8 0 0 1 1560.5 5.5" fill="none" stroke="#b4b4b4" stroke-width="2"/><path d="M-0.5 1242 A8 8 0 0 0 6 1245.1" fill="none" stroke="#b0b0b0" stroke-width="2"/></svg>

</body></html>
